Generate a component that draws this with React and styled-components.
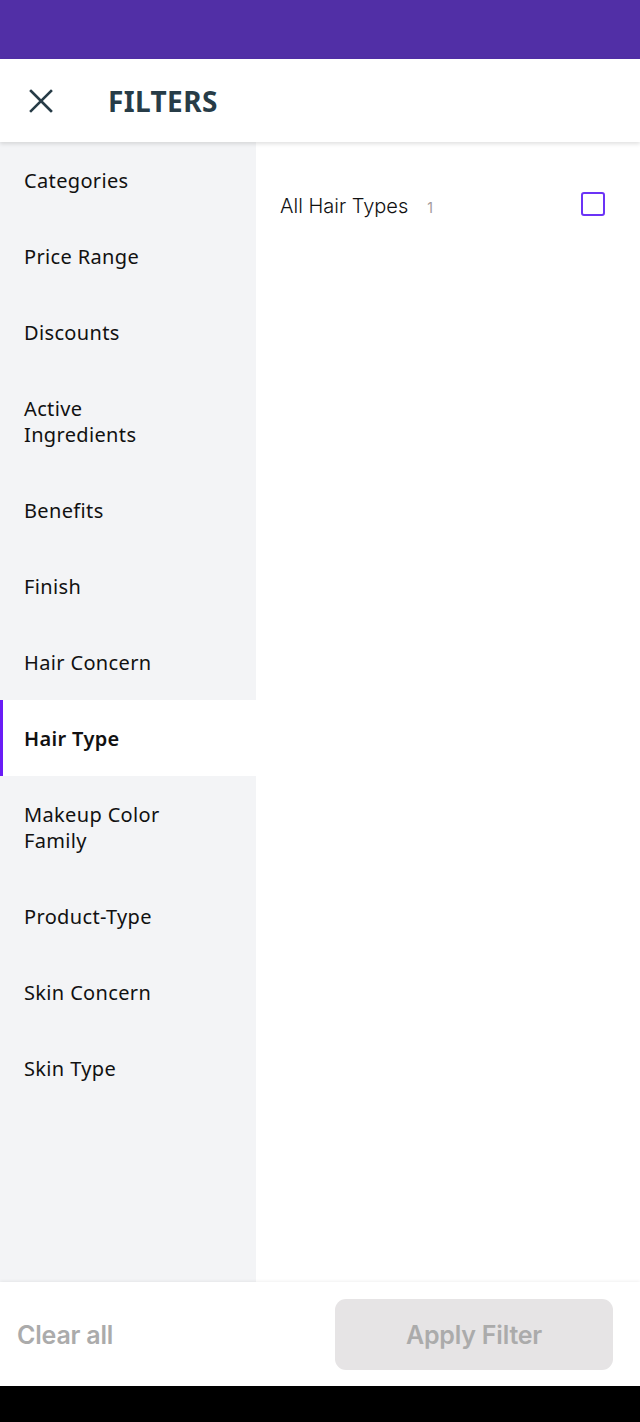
import React, { useState } from 'react';
import styled, { createGlobalStyle } from 'styled-components';

const GlobalStyle = createGlobalStyle`
  html, body { margin: 0; padding: 0; }
  body { font-family: "Noto Sans", "Liberation Sans", sans-serif; background: #fff; }
  * { box-sizing: border-box; }
`;

const Screen = styled.div`
  width: 640px;
  height: 1422px;
  display: flex;
  flex-direction: column;
  overflow: hidden;
`;

const StatusBar = styled.div`
  height: 59px;
  flex-shrink: 0;
  background: #512fa6;
`;

const Header = styled.header`
  height: 83px;
  flex-shrink: 0;
  display: flex;
  align-items: center;
  padding-left: 29px;
  background: #fff;
  box-shadow: 0 2px 4px rgba(0, 0, 0, 0.12);
  position: relative;
  z-index: 1;
`;

const CloseBtn = styled.button`
  width: 24px;
  height: 24px;
  padding: 0;
  border: none;
  background: none;
  display: flex;
  align-items: center;
  justify-content: center;
  margin-right: 55px;
`;

const Title = styled.h1`
  margin: 0;
  font-family: "Noto Sans", sans-serif;
  font-size: 28px;
  font-weight: 700;
  color: #273c47;
  letter-spacing: 0.4px;
`;

const Body = styled.div`
  flex: 1;
  display: flex;
  min-height: 0;
`;

const Sidebar = styled.nav`
  width: 256px;
  background: #f3f4f6;
  display: flex;
  flex-direction: column;
`;

const NavItem = styled.div`
  padding: 26px 24px 24px 21px;
  font-size: 20px;
  line-height: 26px;
  letter-spacing: 0.35px;
  color: #111;
  font-weight: ${p => (p.$active ? 600 : 400)};
  background: ${p => (p.$active ? '#fff' : 'transparent')};
  border-left: 3px solid ${p => (p.$active ? '#6a1cf6' : 'transparent')};
`;

const Content = styled.section`
  flex: 1;
  padding: 40px 34px 0 24px;
`;

const OptionRow = styled.label`
  display: flex;
  align-items: center;
  height: 48px;
`;

const OptionName = styled.span`
  font-family: Inter, sans-serif;
  font-size: 20px;
  font-weight: 300;
  color: #111;
`;

const Count = styled.span`
  font-family: Inter, sans-serif;
  font-size: 14px;
  color: #a39a9a;
  margin-left: 19px;
  margin-top: 3px;
  flex: 1;
`;

const Box = styled.span`
  width: 24px;
  height: 24px;
  border: 2.5px solid #6b33f6;
  border-radius: 3px;
  margin-top: -4px;
  margin-right: 1px;
`;

const Footer = styled.footer`
  height: 104px;
  flex-shrink: 0;
  display: flex;
  align-items: center;
  justify-content: space-between;
  padding: 0 27px 0 17px;
  background: #fff;
  box-shadow: 0 -1px 3px rgba(0, 0, 0, 0.06);
  position: relative;
`;

const ClearBtn = styled.button`
  border: none;
  background: none;
  padding: 0;
  margin-top: 2px;
  font-family: Inter, sans-serif;
  font-size: 25px;
  font-weight: 600;
  color: #ababab;
  letter-spacing: -0.2px;
`;

const ApplyBtn = styled.button`
  width: 278px;
  height: 71px;
  border: none;
  border-radius: 11px;
  background: #e6e4e5;
  font-family: Inter, sans-serif;
  font-size: 25px;
  font-weight: 600;
  color: #ababab;
  letter-spacing: -0.2px;
  padding-top: 2px;
`;

const NavBar = styled.div`
  height: 36px;
  flex-shrink: 0;
  background: #000;
`;

const categories = [
  'Categories',
  'Price Range',
  'Discounts',
  ['Active', 'Ingredients'],
  'Benefits',
  'Finish',
  'Hair Concern',
  'Hair Type',
  ['Makeup Color', 'Family'],
  'Product-Type',
  'Skin Concern',
  'Skin Type',
];

const CloseIcon = () => (
  <svg width="24" height="24" viewBox="0 0 24 24">
    <path d="M2 2 L22 22 M22 2 L2 22" stroke="#273c47" strokeWidth="2.6" strokeLinecap="square" fill="none" />
  </svg>
);

export default function App() {
  const [active, setActive] = useState('Hair Type');
  return (
    <>
      <GlobalStyle />
      <Screen>
        <StatusBar />
        <Header>
          <CloseBtn><CloseIcon /></CloseBtn>
          <Title>FILTERS</Title>
        </Header>
        <Body>
          <Sidebar>
            {categories.map(c => {
              const key = Array.isArray(c) ? c.join(' ') : c;
              return (
                <NavItem key={key} $active={key === active} onClick={() => setActive(key)}>
                  {Array.isArray(c) ? <>{c[0]}<br />{c[1]}</> : c}
                </NavItem>
              );
            })}
          </Sidebar>
          <Content>
            <OptionRow>
              <OptionName>All Hair Types</OptionName>
              <Count>1</Count>
              <Box />
            </OptionRow>
          </Content>
        </Body>
        <Footer>
          <ClearBtn>Clear all</ClearBtn>
          <ApplyBtn>Apply Filter</ApplyBtn>
        </Footer>
        <NavBar />
      </Screen>
    </>
  );
}
